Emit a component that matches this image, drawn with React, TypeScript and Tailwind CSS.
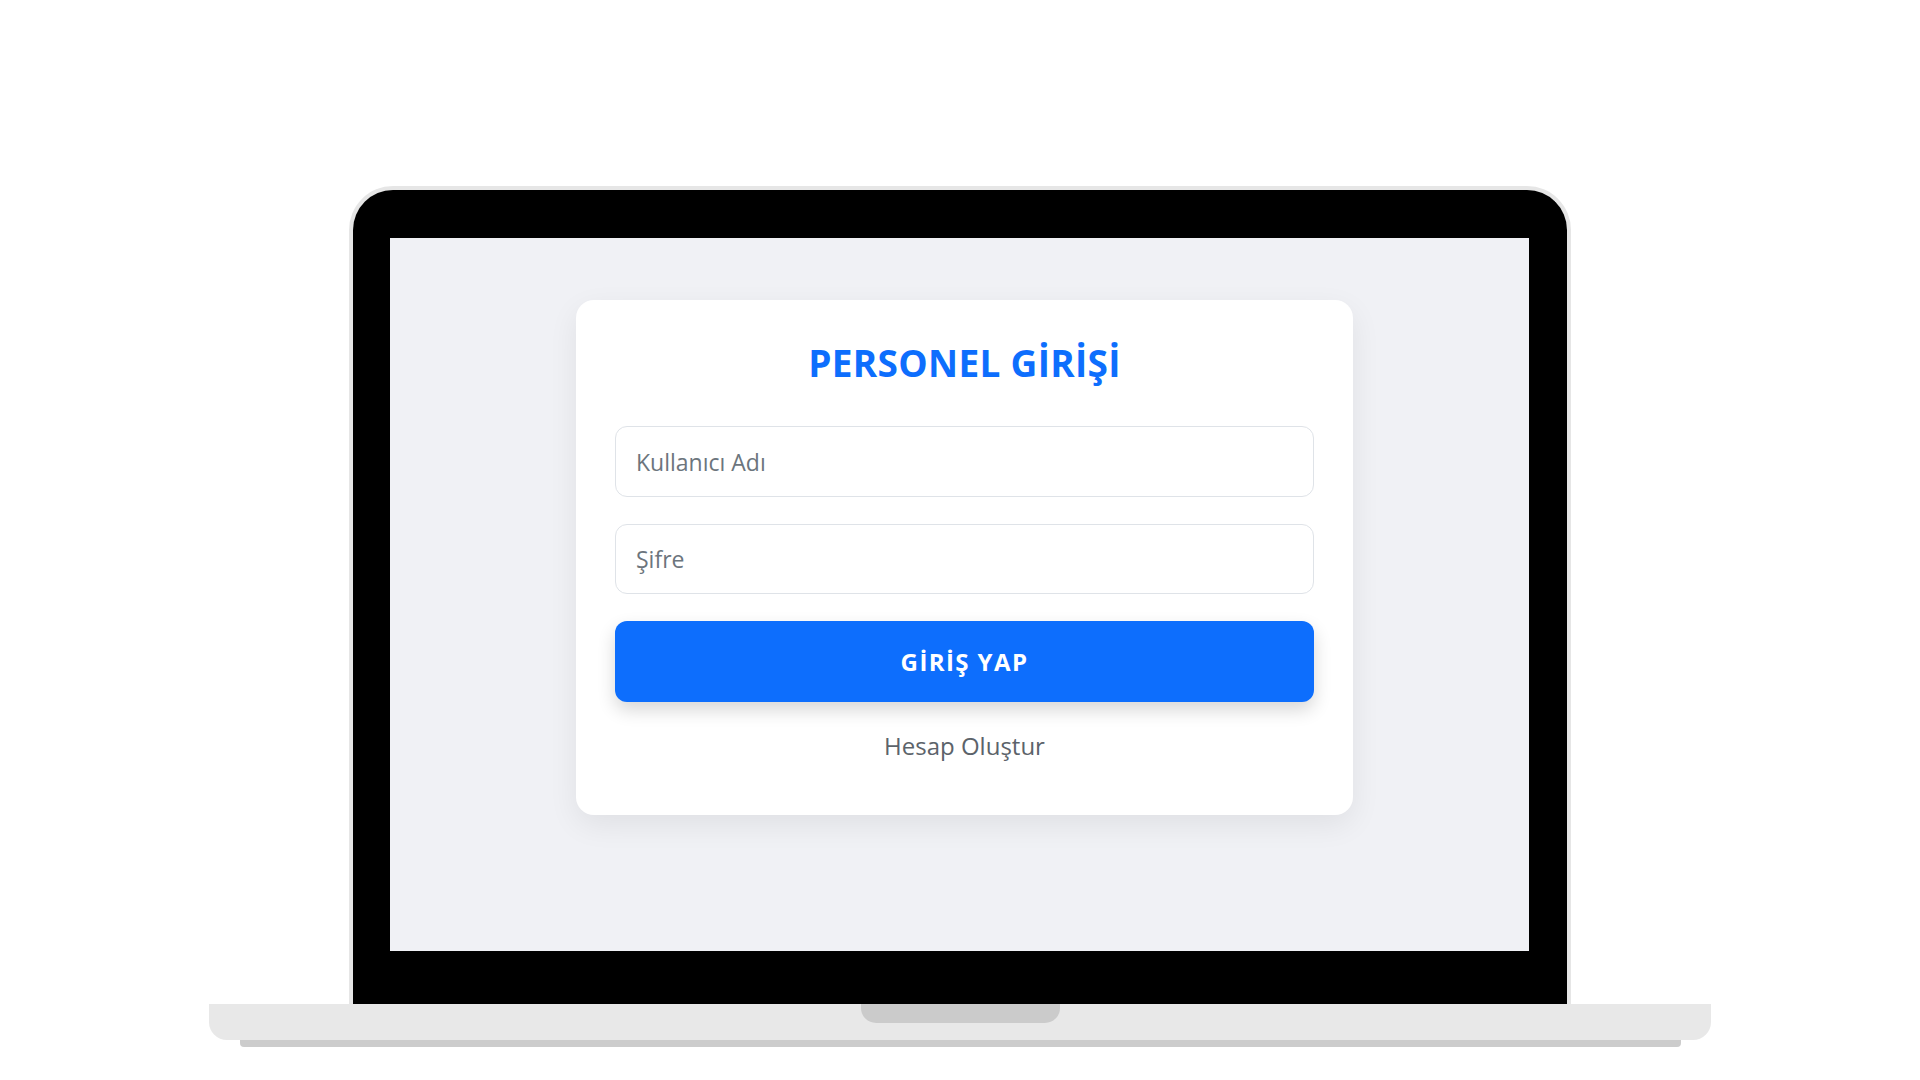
import React from "react";

export default function App() {
  return (
    <div className="w-[1920px] h-[1080px] bg-white overflow-hidden flex flex-col items-center pt-[186px]" style={{ fontFamily: '"Open Sans", "Noto Sans", sans-serif' }}>
      {/* Lid */}
      <div className="w-[1222px] h-[818px] rounded-t-[44px] border-[4px] border-b-0 border-[#e6e6e6] bg-black pt-[48px] pl-[37px] pr-[38px] pb-[53px]">
        <div className="w-full h-full bg-[#f0f1f5] pt-[62px] pl-[186px] pr-[176px]">
          <div className="w-[777px] h-[515px] bg-white rounded-[18px] shadow-[0_10px_30px_rgba(0,0,0,0.07)] pt-[40px] px-[39px] flex flex-col">
            <h1 className="text-center text-[37px] leading-[46px] font-bold text-[#0d6efd] tracking-[0.3px]">PERSONEL GİRİŞİ</h1>
            <input
              className="mt-[40px] h-[71px] w-full rounded-[12px] border border-[#dfe3e8] bg-white pl-[20px] text-[23px] text-[#495057] placeholder:text-[#6c757d] outline-none"
              placeholder="Kullanıcı Adı"
              style={{ fontFamily: '"Open Sans", sans-serif' }}
            />
            <input
              type="password"
              className="mt-[27px] h-[70px] w-full rounded-[12px] border border-[#dfe3e8] bg-white pl-[20px] text-[23px] text-[#495057] placeholder:text-[#6c757d] outline-none"
              placeholder="Şifre"
              style={{ fontFamily: '"Open Sans", sans-serif' }}
            />
            <button className="mt-[27px] h-[81px] w-full rounded-[12px] bg-[#0d6efd] text-white text-[24px] font-bold tracking-[1.4px] shadow-[0_8px_18px_rgba(0,0,0,0.16)]" style={{ fontFamily: '"Open Sans", sans-serif' }}>
              GİRİŞ YAP
            </button>
            <div className="mt-[28px] text-center text-[24px] leading-[32px] text-[#5c636a]">Hesap Oluştur</div>
          </div>
        </div>
      </div>
      {/* Base */}
      <div className="w-[1502px] h-[36px] bg-[#e8e8e8] rounded-b-[18px] flex justify-center">
        <div className="w-[199px] h-[19px] bg-[#cbcbcb] rounded-b-[15px]" />
      </div>
      <div className="w-[1441px] h-[7px] bg-[#cccccc] rounded-b-[4px]" />
    </div>
  );
}
